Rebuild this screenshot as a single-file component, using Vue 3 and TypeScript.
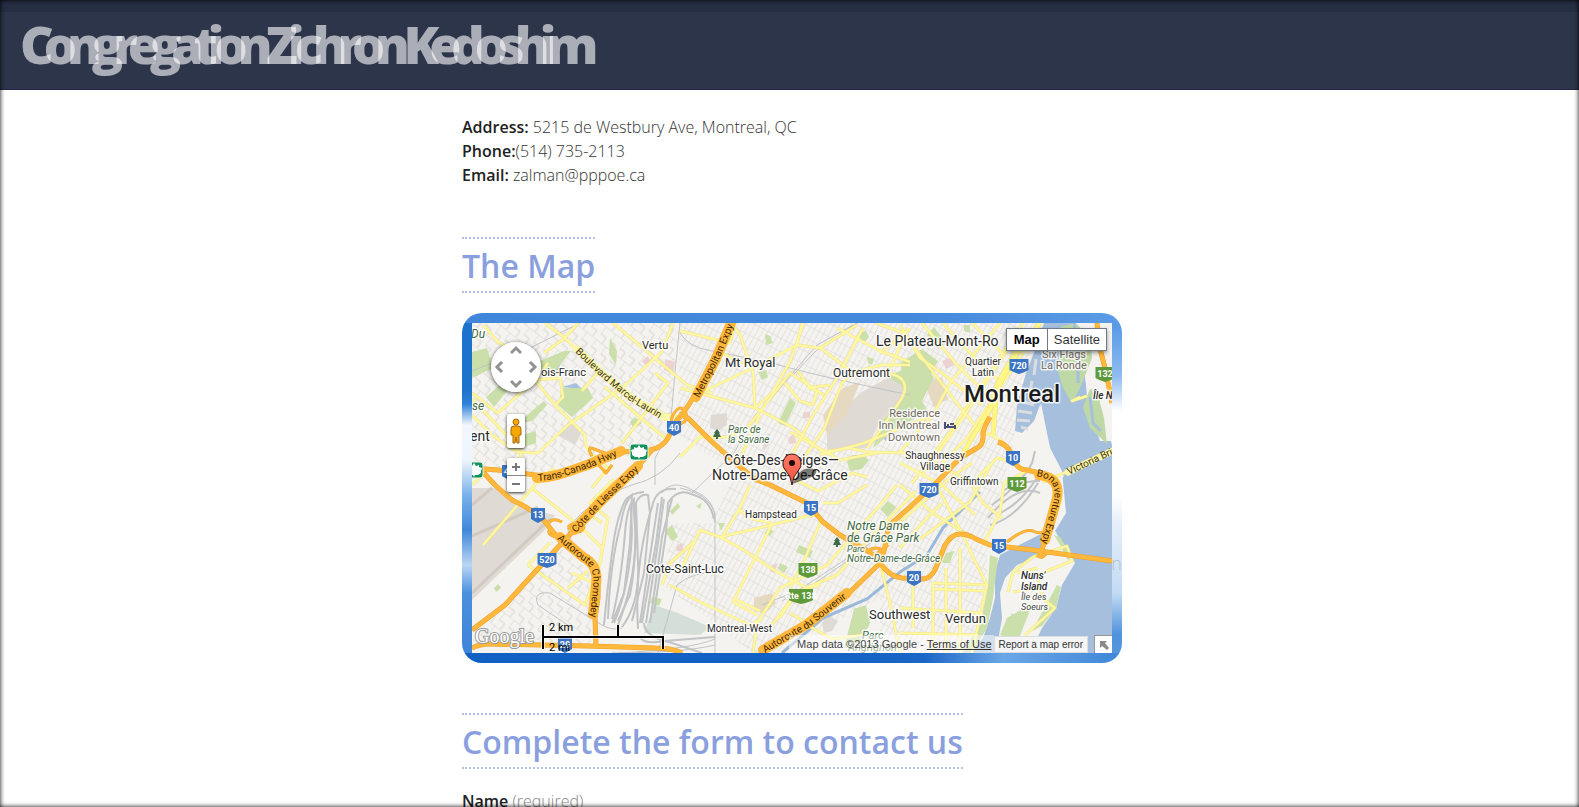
<script setup lang="ts">
import { ref } from 'vue'

interface Label {
  t: string
  x: number
  y: number
  s: number
  c?: string
  a?: 'start' | 'middle' | 'end'
}

interface Shield {
  t: string
  x: number
  y: number
  w: number
  green?: boolean
}

interface RoadName {
  id: string
  d: string
  t: string
  hwy: boolean
  halo: [number, number]
}

const name = ref('')

const highways: string[] = [
  'M258 0 L240 38 L221 75 Q212 90 205 97 L196 115 Q190 125 178 127 L150 129 Q134 130 123 136 L93 149 Q80 154 63 152 L26 147 L0 145',
  'M207 92 Q214 92 220 99 L238 117 L258 135 L281 155 L298 162 L335 180 L351 199 L368 212 L388 224 Q402 230 408 240 Q418 254 430 255 L450 256 Q460 256 465 242 L473 222 Q480 211 488 211 Q496 211 504 216 L518 222 L561 227 L640 238',
  'M288 330 L335 302 L375 272 L408 240 Q413 228 415 212 Q416 204 421 199 L438 184 L465 159 L488 135 L505 125 Q512 122 511 110 Q512 104 518 94',
  'M526 119 Q538 122 541 137 Q546 147 555 147 L571 151 Q588 154 586 168 L583 182 L575 212 L568 232',
  'M0 307 L33 282 L63 249 L90 220 L116 192 L146 162 L163 147 L180 127',
  'M10 148 L23 162 L40 177 Q56 184 70 195 L90 220 L116 240 Q126 246 126 256 L126 275 L123 295 L124 322',
  'M0 325 Q8 321 18 321 L116 323 L183 325 Q200 325 210 330',
  'M625 0 L627 22 L633 45 L638 69 L640 80',
  'M535 219 Q552 205 561 208 Q572 214 578 200',
  'M200 94 Q198 104 206 102 Q218 98 213 88 Q207 80 200 94',
  'M77 200 Q80 194 90 199 M78 205 Q74 212 84 214 M96 204 Q108 214 112 204 Q104 196 96 204',
  'M565 232 Q570 238 576 228',
  'M396 228 Q404 222 412 228 M398 236 L416 222 M120 133 Q114 122 122 126 L138 132 M122 137 L134 150 L140 142',
]

const arterials: string[] = [
  'M73 0 L93 15 L126 49 L156 75 L183 90 L208 94',
  'M106 0 L93 15 L72 30',
  'M11 2 L26 19 L46 30',
  'M201 0 L190 29 L150 65 L96 102 L66 130 L45 129 L20 112 L0 92',
  'M0 70 L26 90 L63 57 L76 40',
  'M63 57 L88 55 L91 74 L83 82',
  'M63 57 L83 82 L113 112 Q112 122 118 130 L136 145 L120 165',
  'M0 76 L50 128 L46 140',
  'M141 0 L215 62 L240 70',
  'M133 64 L176 101 L197 118',
  'M183 50 L196 60 L150 120',
  'M126 49 L110 68',
  'M11 222 L63 162 L82 145',
  'M60 165 L110 205 L130 225',
  'M0 162 L18 146',
  'M56 242 L113 282 L128 240 L136 195 L118 180 L142 156',
  'M56 242 L78 220',
  'M96 265 L116 248',
  'M100 250 L126 262',
  'M116 190 L130 200',
  'M208 8 L258 20 L262 4 L268 12 L281 49 L283 85',
  'M283 85 L300 70 L318 39 L331 2',
  'M228 70 L281 45 L325 22 L348 25 L381 49 L410 42 L438 42',
  'M246 28 L281 45',
  'M208 65 L283 85 L320 104 L351 129 L378 125 L395 129 L438 130',
  'M265 142 L288 92',
  'M228 114 L256 114 L275 105 L318 50 L352 72',
  'M308 155 L341 92 L365 55 L391 5',
  'M320 152 L352 106 L370 60 L381 49',
  'M326 48 L338 65 L345 68 L341 82 L328 78 L313 60',
  'M335 65 L358 62',
  'M365 5 L408 28 L438 39',
  'M330 0 L325 22',
  'M348 25 L385 2',
  'M408 30 L438 6',
  'M436 5 L416 50 Q440 55 430 75 L410 105 L395 125',
  'M208 134 L232 110',
  'M318 109 L368 137 L405 130',
  'M278 162 L267 187 L251 212',
  'M267 187 L280 196 L300 200',
  'M208 249 L228 207 L248 214 L270 226 L305 249 L335 265 L348 262',
  'M248 214 L291 204 L331 194 L345 192',
  'M190 262 L198 240 L223 218',
  'M198 262 L228 279 L278 302 L290 296',
  'M261 279 L285 292 M261 279 L300 201 M263 276 L288 288',
  'M281 330 L285 300 L308 265 L355 242 L408 182 L425 162',
  'M308 295 L325 269 L365 252 L395 218 L444 168',
  'M300 302 L318 278 M318 290 L328 296 L335 302 L360 316 L390 312',
  'M349 198 L331 240 L318 265',
  'M351 180 L366 180 L395 162',
  'M428 162 L461 190 L495 212',
  'M320 155 L346 168 L380 150 L395 154',
  'M348 132 L392 120 L461 92',
  'M461 92 L478 60 L528 0',
  'M440 160 L478 109 L551 0',
  'M470 140 L495 115 L561 15',
  'M450 152 L490 96 L540 20',
  'M428 129 L461 92',
  'M404 0 L432 10 L461 49 L480 74 L505 105 L530 118',
  'M428 2 L448 35 L470 50 L510 82',
  'M471 0 L498 30 L528 59',
  'M450 0 L485 42 L522 78',
  'M500 0 L530 30',
  'M446 130 L500 160 L525 135 L541 139',
  'M428 140 L470 162 L503 192',
  'M465 163 L491 212 L500 232 L515 262 L500 330',
  'M428 199 L478 155 L500 140',
  'M448 216 L498 179 L520 140',
  'M428 225 L450 200 L470 180',
  'M408 240 L418 280 L428 330',
  'M461 259 L461 330 M441 262 L441 305 M488 225 L488 330',
  'M461 260 L516 262 M461 266 L514 268 M428 285 L510 290 M428 310 L506 312 M474 245 L474 330',
  'M511 222 L528 189 L532 160 L555 148',
  'M500 162 L511 180 L530 195',
  'M571 159 L588 152 L640 127',
  'M536 269 L541 249 L561 234 L595 223 L600 238 L565 252 L570 275 L583 285 L553 312',
  'M541 269 L568 265 M545 250 L566 245',
  'M608 74 L600 78 L615 73',
]

const bigArterials: string[] = ['M521 112 L525 65 L545 30 L568 0', 'M514 96 L526 60 L556 8', 'M488 135 L520 82 L534 45']

const greens: string[] = [
  '0,29 15,25 21,45 0,55',
  '90,65 116,65 121,75 100,94 86,82',
  '68,38 92,28 99,28 80,52 70,50',
  '138,15 145,28 144,42 137,31',
  '55,92 72,78 75,82 60,98 50,100',
  '14,74 30,60 40,62 22,84',
  '50,112 64,108 64,120 52,124',
  '158,99 163,94 170,100 162,106',
  '306,100 318,75 324,80 313,103',
  '293,11 298,13 301,20 294,22',
  '286,49 294,47 296,54 290,57',
  '375,139 380,132 391,132 397,137 390,146 378,148',
  '386,10 394,8 397,14 391,21',
  '395,34 402,36 400,42 396,40',
  '415,54 432,46 440,42 452,40 462,55 450,78 456,88 425,105 401,125 408,100 428,79 435,69 428,61',
  '428,40 450,26 466,38 454,60 434,66',
  '455,12 462,4 474,20 466,26',
  '492,2 498,2 498,10 492,8',
  '198,188 206,180 208,184 200,192',
  '193,208 200,202 206,214 200,218',
  '22,265 26,261 29,265 24,269',
  '224,183 230,180 228,186',
  '246,200 253,200 249,208',
  '296,205 302,208 298,213 293,210',
  '327,222 341,228 338,235 324,229',
  '308,240 316,244 312,250 306,246',
  '408,186 416,178 424,184 416,194',
  '180,274 190,276 187,283 178,280',
  '382,286 394,282 398,300 386,325 372,325',
  '518,232 526,235 521,275 515,305 500,330 490,330 509,300 516,262',
  '535,295 561,280 551,305 546,318 528,312',
  '582,212 588,214 603,238 595,236 588,222',
  '560,308 585,262 589,264 584,285 570,303',
  '474,230 482,228 478,240 470,240',
]

const greys: string[] = [
  '0,165 25,165 50,185 83,192 75,205 0,277',
  '98,97 111,107 103,122 85,112',
  '355,128 355,112 375,82 390,69 421,52 435,69 428,79 408,99 395,125',
  '239,92 255,90 255,102 246,108 238,105',
  '350,300 356,292 366,298 360,308 352,310',
  '283,150 298,150 292,161 282,160',
  '290,118 297,110 298,120 292,128',
]

const beiges: string[] = ['355,112 351,92 371,65 388,59 375,92', '282,275 300,270 304,280 294,290 282,288', '452,60 470,54 476,76 462,84']
const pinks: string[] = ['170,38 176,33 178,38 173,42', '193,36 203,39 201,51 192,47', '316,116 322,110 324,120 317,121', '331,90 338,88 338,95 331,95', '470,38 480,34 482,42 474,46', '205,222 211,220 211,228 204,228', '300,242 306,240 302,250 298,248']

const rails: string[] = [
  'M208 0 L203 49 L198 108 L183 135 L183 162',
  'M0 48 L60 24 L108 0',
  'M208 10 Q216 24 240 28 L300 40 Q340 52 438 72',
  'M381 2 L345 22 L325 45 L300 75 L283 92 L262 130 L220 170',
  'M385 0 L344 28 L321 52',
  'M208 165 Q236 170 243 190 L243 330',
  'M146 330 Q220 326 243 316 M140 330 Q210 330 243 322',
  'M208 130 Q190 155 160 162 Q120 174 96 205 Q95 215 108 230',
  'M66 282 Q60 268 78 270 L130 302 Q140 308 150 305 M66 282 L100 305',
  'M395 225 L340 262 L290 282 M310 278 L420 206',
  'M190 170 Q200 155 222 168 Q244 176 243 200 M186 330 L205 262 Q222 248 243 250',
]

const yard: string[] = [
  'M132 302 Q136 260 140 230 Q144 196 153 178 Q158 170 172 169',
  'M136 296 Q138 240 149 200 Q152 180 160 172 L158 220 L152 270 L140 300',
  'M140 296 Q149 260 153 210 Q155 184 162 176 Q166 230 158 272 L146 298',
  'M142 300 Q158 262 160 210 L159 184 M146 302 Q162 262 164 215 L161 180',
  'M150 304 Q168 280 166 240 L164 180 Q168 170 176 172 L178 190 L172 250 L160 298',
  'M168 300 L180 220 L186 180 M170 300 L184 220 L190 174',
  'M174 300 L186 220 L192 176 M178 300 L190 214 L200 176',
  'M182 290 L194 210 L196 180 Q206 164 222 172 Q238 176 242 196',
  'M166 306 Q162 240 180 184 Q184 164 204 166',
  'M168 314 Q172 322 192 318 L243 314 M172 300 Q172 314 200 320 L230 330',
  'M520 182 Q550 160 560 140 L563 128 M528 190 Q550 180 568 150',
  'M516 195 Q545 160 568 170 M518 202 Q544 196 566 160 M530 168 Q548 158 568 158',
]

const labels: Label[] = [
  { t: 'Vertu', x: 170, y: 26, s: 11 },
  { t: 'ois-Franc', x: 69, y: 53, s: 11 },
  { t: 'ent', x: -2, y: 118, s: 14 },
  { t: 'Mt Royal', x: 253, y: 44, s: 13 },
  { t: 'Outremont', x: 361, y: 54, s: 12 },
  { t: 'Côte-Des-Neiges—', x: 252, y: 142, s: 14 },
  { t: 'Notre-Dame-De-Grâce', x: 240, y: 157, s: 14 },
  { t: 'Le Plateau-Mont-Ro', x: 404, y: 23, s: 14 },
  { t: 'Quartier', x: 511, y: 42, s: 10, a: 'middle' },
  { t: 'Latin', x: 511, y: 53, s: 10, a: 'middle' },
  { t: 'Residence', x: 468, y: 94, s: 11, a: 'end', c: 'dim' },
  { t: 'Inn Montreal', x: 468, y: 106, s: 11, a: 'end', c: 'dim' },
  { t: 'Downtown', x: 468, y: 118, s: 11, a: 'end', c: 'dim' },
  { t: 'Shaughnessy', x: 463, y: 136, s: 10, a: 'middle' },
  { t: 'Village', x: 463, y: 147, s: 10, a: 'middle' },
  { t: 'Griffintown', x: 478, y: 162, s: 10 },
  { t: 'Six Flags', x: 592, y: 35, s: 11, a: 'middle', c: 'dim' },
  { t: 'La Ronde', x: 592, y: 46, s: 11, a: 'middle', c: 'dim' },
  { t: 'Montreal', x: 492, y: 79, s: 24, c: 'city' },
  { t: 'Île N', x: 621, y: 76, s: 10, c: 'isle' },
  { t: 'Hampstead', x: 273, y: 195, s: 10 },
  { t: 'Cote-Saint-Luc', x: 174, y: 250, s: 12 },
  { t: 'Montreal-West', x: 235, y: 309, s: 10 },
  { t: 'Southwest', x: 397, y: 296, s: 13 },
  { t: 'Verdun', x: 473, y: 300, s: 13 },
  { t: 'Du', x: -1, y: 15, s: 12, c: 'park' },
  { t: 'se', x: 0, y: 87, s: 12, c: 'park' },
  { t: 'Parc de', x: 256, y: 110, s: 10, c: 'park' },
  { t: 'la Savane', x: 256, y: 120, s: 10, c: 'park' },
  { t: 'Notre Dame', x: 375, y: 207, s: 12, c: 'park' },
  { t: 'de Grâce Park', x: 375, y: 219, s: 12, c: 'park' },
  { t: 'Parc', x: 375, y: 229, s: 9, c: 'park' },
  { t: 'Notre-Dame-de-Grâce', x: 375, y: 239, s: 10, c: 'park' },
  { t: 'Parc', x: 390, y: 316, s: 11, c: 'park' },
  { t: 'Angrignon', x: 376, y: 328, s: 11, c: 'park' },
  { t: "Nuns'", x: 549, y: 256, s: 10, c: 'isle' },
  { t: 'Island', x: 549, y: 267, s: 10, c: 'isle' },
  { t: 'Île des', x: 549, y: 277, s: 9, c: 'soft' },
  { t: 'Soeurs', x: 549, y: 287, s: 9, c: 'soft' },
]

const shields: Shield[] = [
  { t: '40', x: 202, y: 105, w: 14 },
  { t: '40', x: 37, y: 149, w: 14 },
  { t: '13', x: 66, y: 192, w: 14 },
  { t: '520', x: 75, y: 237, w: 19 },
  { t: '20', x: 93, y: 322, w: 14 },
  { t: '15', x: 339, y: 185, w: 14 },
  { t: '20', x: 442, y: 255, w: 14 },
  { t: '15', x: 527, y: 223, w: 14 },
  { t: '720', x: 457, y: 167, w: 19 },
  { t: '720', x: 547, y: 43, w: 19 },
  { t: '10', x: 541, y: 135, w: 14 },
  { t: '112', x: 545, y: 161, w: 19, green: true },
  { t: '138', x: 336, y: 247, w: 19, green: true },
  { t: 'Rte 138', x: 329, y: 273, w: 24, green: true },
  { t: '132', x: 633, y: 51, w: 19, green: true },
]

const roadNames: RoadName[] = [
  { id: 'n1', d: 'M103 29 L128 53 L158 78 L192 98', t: 'Boulevard Marcel-Laurin', hwy: false, halo: [2, -3] },
  { id: 'n2', d: 'M227 75 L247 37 L265 -6', t: 'Metropolitan Expy', hwy: true, halo: [-3, -1] },
  { id: 'n3', d: 'M66 158 Q82 157 96 152 L122 143 L150 131', t: 'Trans-Canada Hwy', hwy: true, halo: [-1, -3] },
  { id: 'n4', d: 'M104 210 L130 182 L168 146', t: 'Côte de Liesse Expy', hwy: true, halo: [-2, -3] },
  { id: 'n5', d: 'M85 216 L108 236 Q124 244 121 264 L118 293', t: 'Autoroute Chomedey', hwy: true, halo: [3, -2] },
  { id: 'n6', d: 'M293 330 L336 305 L377 273', t: 'Autoroute du Souvenir', hwy: true, halo: [-2, -3] },
  { id: 'n7', d: 'M564 153 Q588 156 581 180 L570 218', t: 'Bonaventure Expy', hwy: true, halo: [3, -1] },
  { id: 'n8', d: 'M597 152 L650 127', t: 'Victoria Brid', hwy: false, halo: [-1, -3] },
]

const trees: [number, number][] = [[245, 111], [365, 219]]
const leaves: [number, number][] = [[167, 129], [2, 147]]

const shieldPath = (s: Shield): string => {
  const l = s.x - s.w / 2
  const r = s.x + s.w / 2
  return `M${l} ${s.y - 7} H${r} V${s.y + 4} Q${r - 3} ${s.y + 6} ${s.x} ${s.y + 8} Q${l + 3} ${s.y + 6} ${l} ${s.y + 4} Z`
}
</script>

<template>
  <div class="page">
    <header class="masthead">
      <h1>Congregation Zichron Kedoshim</h1>
    </header>

    <main class="content">
      <address class="details">
        <p><strong>Address:</strong> 5215 de Westbury Ave, Montreal, QC</p>
        <p><strong>Phone:</strong>(514) 735-2113</p>
        <p><strong>Email:</strong> zalman@pppoe.ca</p>
      </address>

      <h2>The Map</h2>

      <section class="frame" aria-label="Map">
        <span class="ghost" aria-hidden="true">n</span>
        <div class="map">
          <svg class="canvas" viewBox="0 0 640 330" preserveAspectRatio="xMidYMid slice">
            <defs>
              <pattern id="streets" width="5" height="12" patternUnits="userSpaceOnUse" patternTransform="rotate(28)">
                <path d="M0 0 H5 M0 0 V12" class="street" />
              </pattern>
              <pattern id="blocks" width="12" height="16" patternUnits="userSpaceOnUse" patternTransform="rotate(38)">
                <path d="M0 0 H12 M0 0 V9 M7 9 V16 M0 9 H7" class="street" />
              </pattern>
              <linearGradient id="pinFill" x1="0" y1="0" x2="0" y2="1">
                <stop offset="0" stop-color="#ff7a66" />
                <stop offset="1" stop-color="#f0503f" />
              </linearGradient>
              <path v-for="n in roadNames" :id="n.id" :key="n.id" :d="n.d" />
            </defs>

            <rect width="640" height="330" fill="#f4f3f0" />
            <path d="M0 0 H208 L198 110 L183 125 L100 150 H0 Z M84 222 L122 250 L118 322 L0 318 Z" fill="url(#blocks)" />
            <path d="M208 0 H590 L545 90 L540 130 L530 160 L515 230 L515 330 H408 V275 L300 330 H280 L243 300 L190 262 L200 200 L240 200 L262 150 L205 110 Z" fill="url(#streets)" />

            <polygon v-for="p in greys" :key="p" :points="p" fill="#dfdad4" />
            <path d="M0 213 L66 184 M0 270 L78 196 M20 165 L0 182" stroke="#d2cac1" stroke-width="3" fill="none" />
            <polygon v-for="p in beiges" :key="p" :points="p" fill="#e6d9c2" />
            <polygon v-for="p in pinks" :key="p" :points="p" fill="#ecd3d1" />
            <path d="M172 310 L182 282 L206 290 L238 304 L228 312 Z" fill="#d3dfd8" />

            <g fill="#a5bfdd">
              <path d="M572 0 L562 30 L554 50 L545 82 L543 108 L550 110 L562 98 L568 82 L573 105 L578 125 L590 148 L594 190 L583 208 L603 240 L590 262 L584 285 L570 305 L558 330 H640 V118 L628 118 L616 85 L612 40 L604 0 Z" />
              <path d="M583 204 L551 220 L528 232 L523 249 L523 275 L518 295 L511 315 L498 330 H524 L530 295 L528 270 L533 255 L545 242 L565 234 Z" />
              <path d="M540 290 L545 302 L536 306 Z M78 42 L90 36 L86 48 Z M90 64 L104 60 L110 66 Z M409 113 L415 110 L414 118 Z" />
            </g>
            <path d="M508 169 L471 205 L455 232 L428 249 L395 276 L351 295 L310 330" stroke="#9bb9d9" stroke-width="3" fill="none" />
            <path d="M548 78 L562 82 M546 88 L560 90 M545 97 L558 98 M560 58 L557 74 M564 36 L562 52 M549 104 L556 106" stroke="#dcdde0" stroke-width="3" fill="none" />
            <path d="M569 80 L563 108 L566 140 L586 154 L592 154 L578 125 L574 105 Z" fill="#f4f3f0" />
            <path d="M604 0 H640 V122 L631 92 L614 60 Z" fill="#f4f3f0" />
            <path d="M588 29 L588 4 L604 0 L618 15 L620 35 L608 65 L600 80 L591 65 L585 45 Z M611 84 L618 66 L625 68 L632 95 L635 121 L618 105 Z" fill="#bfd9a6" />
            <path d="M602 0 L606 20 L606 60 M618 74 L621 100 L629 108" stroke="#a5bfdd" stroke-width="3" fill="none" />
            <polygon v-for="p in greens" :key="p" :points="p" fill="#cadfaa" />

            <g fill="none" stroke="#c1c3c5">
              <path v-for="d in yard" :key="d" :d="d" stroke-width="2" />
              <path v-for="d in rails" :key="d" :d="d" stroke-width="1" />
            </g>

            <g fill="none" stroke-linejoin="round">
              <path v-for="d in arterials" :key="'c' + d" :d="d" stroke="#f0e38c" stroke-width="3" />
              <path v-for="d in arterials" :key="d" :d="d" stroke="#fff8a0" stroke-width="2" />
              <path v-for="d in bigArterials" :key="'c' + d" :d="d" stroke="#ece087" stroke-width="5" />
              <path v-for="d in bigArterials" :key="d" :d="d" stroke="#fff683" stroke-width="4" />
              <path v-for="(d, i) in highways" :key="'c' + d" :d="d" stroke="#ee9f24" :stroke-width="i < 8 ? 5 : 3" />
              <path v-for="(d, i) in highways" :key="d" :d="d" stroke="#ffb83b" :stroke-width="i < 8 ? 4 : 2" />
              <path
                v-for="n in roadNames"
                :key="n.id"
                :d="n.d"
                :transform="`translate(${n.halo[0]} ${n.halo[1]})`"
                :stroke="n.hwy ? '#ffb83b' : '#fdf7a8'"
                :stroke-width="n.hwy ? 10 : 7"
                stroke-linecap="round"
              />
            </g>

            <text v-for="n in roadNames" :key="n.id" class="road" :class="{ hwy: n.hwy }">
              <textPath :href="'#' + n.id">{{ n.t }}</textPath>
            </text>

            <g v-for="s in shields" :key="s.t + s.x">
              <path :d="shieldPath(s)" :fill="s.green ? '#5f9a3a' : '#3b74c4'" />
              <text :x="s.x" :y="s.y + 3" class="shield">{{ s.t }}</text>
            </g>

            <g v-for="l in leaves" :key="l[0]" :transform="`translate(${l[0]} ${l[1]})`">
              <rect x="-9" y="-8" width="18" height="16" rx="3" fill="#12915c" stroke="#e6f3ea" />
              <path d="M0 -7 L2 -4 L5 -5 L5 -3 L8 -2 L7 1 L7 3 L4 5 L1 5 L0 7 L-1 5 L-4 5 L-7 3 L-7 1 L-8 -2 L-5 -3 L-5 -5 L-2 -4 Z" fill="#fff" />
            </g>
            <g v-for="t in trees" :key="t[0]" :transform="`translate(${t[0]} ${t[1]})`">
              <path d="M0 -5 L3 -1 H2 L4 3 H1 V5 H-1 V3 H-4 L-2 -1 H-3 Z" fill="#3f6b4c" />
            </g>
            <path d="M473 99 V106 M473 104 H483 M483 102 V106 M475 102 H477 M478 101 H482" stroke="#4a4f74" stroke-width="2" fill="none" />

            <text
              v-for="l in labels"
              :key="l.t + l.y"
              :x="l.x"
              :y="l.y"
              :font-size="l.s"
              :text-anchor="l.a ?? 'start'"
              class="label"
              :class="l.c"
            >{{ l.t }}</text>

            <path d="M320 161 L327 150 Q334 143 344 147 Q346 152 337 155 Z" fill="#000" opacity="0.5" />
            <path d="M320 162 Q319 153 314 148 Q310 144 311 139 Q313 131 320 131 Q327 131 329 139 Q330 144 326 148 Q321 153 320 162 Z" fill="url(#pinFill)" stroke="#3a1410" />
            <circle cx="320" cy="140" r="3" fill="#1a0a08" />

            <text x="3" y="320" class="logo">Google</text>
            <g class="scale">
              <path d="M71 302 V326 M71 314 H191 M146 302 V314 M191 313 V326" stroke="#fff" stroke-width="4" fill="none" opacity="0.6" />
              <path d="M71 302 V326 M70 314 H192 M146 302 V314 M191 313 V326" stroke="#000" stroke-width="2" fill="none" />
              <text x="77" y="308">2 km</text>
              <text x="77" y="328">2 mi</text>
            </g>
          </svg>

          <div class="pan">
            <button type="button" class="up" aria-label="Pan up"><svg viewBox="0 0 12 8"><path d="M1 7 L6 2 L11 7" /></svg></button>
            <button type="button" class="left" aria-label="Pan left"><svg viewBox="0 0 8 12"><path d="M7 1 L2 6 L7 11" /></svg></button>
            <button type="button" class="right" aria-label="Pan right"><svg viewBox="0 0 8 12"><path d="M1 1 L6 6 L1 11" /></svg></button>
            <button type="button" class="down" aria-label="Pan down"><svg viewBox="0 0 12 8"><path d="M1 1 L6 6 L11 1" /></svg></button>
          </div>

          <button type="button" class="pegman" aria-label="Street View">
            <svg viewBox="0 0 12 26">
              <path d="M4 8 H8 Q11 8 11 11 V17 H9 V25 H7 L6 19 L5 25 H3 V17 H1 V11 Q1 8 4 8 Z" fill="#f6a800" stroke="#a9670a" />
              <circle cx="6" cy="4" r="3" fill="#f6a800" stroke="#a9670a" />
            </svg>
          </button>

          <div class="zoom">
            <button type="button" aria-label="Zoom in"><svg viewBox="0 0 10 10"><path d="M5 1 V9 M1 5 H9" /></svg></button>
            <button type="button" aria-label="Zoom out"><svg viewBox="0 0 10 10"><path d="M1 5 H9" /></svg></button>
          </div>

          <div class="types">
            <button type="button" class="active">Map</button>
            <button type="button">Satellite</button>
          </div>

          <div class="credits">
            <span class="data">Map data ©2013 Google - <a href="#terms">Terms of Use</a></span>
            <a class="report" href="#report">Report a map error</a>
            <button type="button" class="overview" aria-label="Show overview map">
              <svg viewBox="0 0 10 10"><path d="M1 1 H8 L6 3 L10 8 L8 10 L3 6 L1 8 Z" /></svg>
            </button>
          </div>
        </div>
      </section>

      <h2>Complete the form to contact us</h2>

      <form class="contact" @submit.prevent>
        <label for="name"><strong>Name</strong> <span>(required)</span></label>
        <input id="name" v-model="name" type="text" required />
      </form>
    </main>
  </div>
</template>

<style>
body {
  margin: 0;
  background: #fff;
}
</style>

<style scoped>
.page {
  height: 100vh;
  overflow-y: auto;
  scrollbar-width: none;
  font-family: "Open Sans", "Noto Sans", sans-serif;
  font-size: 16px;
  font-weight: 300;
  line-height: 24px;
  color: #333;
}

.page::after {
  content: "";
  position: fixed;
  inset: 0;
  pointer-events: none;
  box-shadow: inset 0 0 5px #000;
}

.masthead {
  box-sizing: border-box;
  height: 90px;
  padding: 10px 20px 0;
  background: linear-gradient(#262e44 12px, #2d354b 12px);
  border-bottom: 1px solid #21264a;
}

h1 {
  margin: 0;
  font-size: 52px;
  line-height: 68px;
  font-weight: 800;
  letter-spacing: -10px;
  white-space: nowrap;
  color: rgba(255, 255, 255, 0.6);
}

.content {
  box-sizing: border-box;
  width: 100%;
  max-width: 665px;
  margin: 0 auto;
  padding: 25px 0 40px 5px;
}

.details {
  margin-bottom: 50px;
  font-style: normal;
}

.details p {
  margin: 0;
}

strong {
  font-weight: 600;
  color: #222;
}

h2 {
  width: fit-content;
  margin: 0 0 20px;
  padding: 6px 0 4px;
  border-top: 2px dotted #b3c1ea;
  border-bottom: 2px dotted #b3c1ea;
  font-size: 32px;
  line-height: 42px;
  font-weight: 600;
  color: #8aa0de;
}

.frame {
  position: relative;
  overflow: hidden;
  margin-bottom: 50px;
  padding: 10px;
  border-radius: 20px;
  background:
    linear-gradient(90deg, #4086da, #4489dc 70%, #5c9ce6) top / 100% 10px no-repeat,
    linear-gradient(90deg, #1160c4 50%, #1b66c6 70%, #6ba6e6 82%, #3f86d8) bottom / 100% 10px no-repeat,
    linear-gradient(#1d72cb 22%, #2e82d8 26%, #f2f7fd 32%, #eef5fc 42%, #7ab2ea 52%, #3f88da 62%, #b9d5f3 72%, #4a90de 80%, #3d83d8) left / 10px 100% no-repeat,
    linear-gradient(#4c92e4, #8ebcf0 18%, #fff 28%, #fff 52%, #e6effa 60%, #c2dbf4 80%, #4f92dc 92%, #5899e0) right / 10px 100% no-repeat;
}

.ghost {
  position: absolute;
  right: 0;
  top: 238px;
  font-size: 18px;
  color: #b4c0ce;
}

.map {
  position: relative;
  overflow: hidden;
  background: #f4f3f0;
  font-family: Roboto, "Liberation Sans", sans-serif;
}

.canvas {
  display: block;
  width: 100%;
  height: 330px;
  font-family: Roboto, "Liberation Sans", sans-serif;
}

.street {
  fill: none;
  stroke: #dad6cf;
  stroke-width: 1;
}

.label {
  fill: #2b2b2b;
  stroke: #fff;
  stroke-width: 3;
  stroke-opacity: 0.8;
  stroke-linejoin: round;
  paint-order: stroke;
  font-weight: 400;
}

.label.dim {
  fill: #716a62;
}

.label.city {
  font-weight: 500;
  fill: #1c1c1c;
}

.label.park {
  font-style: italic;
  fill: #3f6b45;
}

.label.isle {
  font-style: italic;
  font-weight: 500;
}

.label.soft {
  font-style: italic;
  fill: #444;
}

.road {
  font-size: 10px;
  font-weight: 400;
  fill: #3a3320;
}

.road.hwy {
  fill: #3c2400;
}

.shield {
  font-size: 9px;
  font-weight: 700;
  text-anchor: middle;
  fill: #fff;
}

.logo {
  font-family: "Liberation Serif", serif;
  font-size: 20px;
  font-weight: 400;
  fill: #fff;
  stroke: #9a9a9a;
  stroke-width: 2;
  paint-order: stroke;
}

.scale text {
  font-size: 11px;
  font-weight: 400;
  fill: #000;
}

button {
  padding: 0;
  border: 0;
  background: none;
  font-family: inherit;
  cursor: pointer;
}

.pan {
  position: absolute;
  left: 19px;
  top: 19px;
  display: grid;
  grid-template: 16px 18px 16px / 16px 18px 16px;
  place-items: center;
  border-radius: 50%;
  background: radial-gradient(#fff 60%, #f0f0f0);
  box-shadow: 0 1px 4px rgba(0, 0, 0, 0.7);
}

.pan svg {
  display: block;
  width: 12px;
  height: 12px;
  fill: none;
  stroke: #919191;
  stroke-width: 3;
}

.up {
  grid-area: 1 / 2;
}

.left {
  grid-area: 2 / 1;
}

.right {
  grid-area: 2 / 3;
}

.down {
  grid-area: 3 / 2;
}

.pegman,
.zoom {
  position: absolute;
  left: 35px;
  width: 18px;
  border-radius: 2px;
  background: #fff;
  box-shadow: 0 1px 3px rgba(0, 0, 0, 0.8);
}

.pegman {
  top: 91px;
  height: 34px;
}

.pegman svg {
  display: block;
  width: 12px;
  height: 26px;
  margin: 0 auto;
}

.zoom {
  top: 135px;
  display: grid;
  grid-template-rows: 17px 17px;
}

.zoom button {
  display: grid;
  place-items: center;
}

.zoom button + button {
  border-top: 1px solid #8a8a8a;
}

.zoom svg {
  width: 10px;
  height: 10px;
  fill: none;
  stroke: #777;
  stroke-width: 2;
}

.types {
  position: absolute;
  right: 5px;
  top: 5px;
  display: flex;
  border: 1px solid #717b87;
  background: #fff;
  box-shadow: 0 2px 4px rgba(0, 0, 0, 0.4);
}

.types button {
  padding: 0 6px;
  font-size: 13px;
  line-height: 21px;
  font-family: "Liberation Sans", sans-serif;
  color: #333;
}

.types .active {
  padding: 0 7px;
  font-weight: 700;
  color: #000;
}

.types button + button {
  border-left: 1px solid #717b87;
}

.credits {
  position: absolute;
  right: 0;
  bottom: 0;
  display: flex;
  align-items: flex-end;
  font-family: "Liberation Sans", sans-serif;
  font-size: 10px;
  font-weight: 400;
  line-height: 18px;
  white-space: nowrap;
  color: #444;
}

.credits .data {
  padding: 0 2px 0 8px;
  font-size: 11px;
  background: rgba(255, 255, 255, 0.5);
}

.credits a {
  color: #333;
}

.credits .report {
  margin: 0 6px 0 0;
  padding: 0 4px;
  line-height: 15px;
  border: 1px solid #ddd;
  background: #f5f5f5;
  text-decoration: none;
}

.overview {
  display: grid;
  place-items: center;
  width: 18px;
  height: 18px;
  border: solid #979797;
  border-width: 1px 0 0 1px;
  background: #fff;
}

.overview svg {
  width: 10px;
  height: 10px;
  fill: #8a8a8a;
}

.contact {
  display: flex;
  flex-direction: column;
  align-items: flex-start;
  gap: 8px;
}

.contact span {
  color: #888;
}

.contact input {
  box-sizing: border-box;
  width: 50%;
  padding: 8px;
  border: 1px solid #bbb;
  font: inherit;
}
</style>
